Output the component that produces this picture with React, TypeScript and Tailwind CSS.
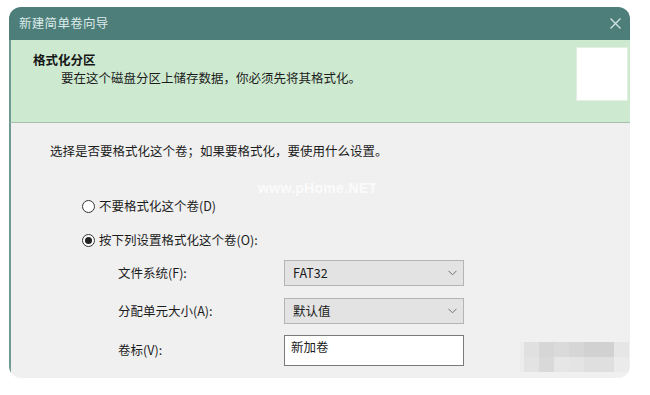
const font = { fontFamily: '"Noto Sans CJK SC", "Noto Sans", sans-serif' };

function Radio({ checked = false }: { checked?: boolean }) {
  return (
    <span className="w-[13px] h-[13px] rounded-full border border-[#333] bg-white flex items-center justify-center shrink-0">
      {checked && <span className="w-[7px] h-[7px] rounded-full bg-[#222]" />}
    </span>
  );
}

function Chevron() {
  return (
    <svg width="9" height="6" viewBox="0 0 9 6" className="shrink-0">
      <polyline points="0.5,0.8 4.5,4.8 8.5,0.8" fill="none" stroke="#6f6f6f" strokeWidth="1" />
    </svg>
  );
}

function Select({ value }: { value: string }) {
  return (
    <div className="w-[180px] h-[26px] bg-[#e3e3e3] border border-[#b4b4b4] flex items-center justify-between pl-[8px] pr-[6px]">
      <span className="text-[12.5px] text-[#1c1c1c]">{value}</span>
      <Chevron />
    </div>
  );
}

const mosaic = [
  ["#ececec", "#e0e0e0", "#d6d6d6", "#dadada", "#d6d6d6", "#d1d1d1", "#e6e6e6"],
  ["#ececec", "#e3e3e3", "#d9d9d9", "#e6e6e6", "#e4e4e4", "#dfdfdf", "#ebebeb"],
];
const mosaicW = [4, 15, 15, 15, 15, 30, 15];

export default function App() {
  return (
    <div className="w-[650px] h-[395px] bg-white relative overflow-hidden pt-[7px] pl-[9px]" style={font}>
      <div className="w-[621px] h-[371px] rounded-[12px] overflow-hidden flex flex-col bg-[#f0f0f0]">
        {/* Title bar */}
        <div className="h-[33px] bg-[#4e7e79] flex items-center justify-between pl-[10px] pr-[9px] shrink-0">
          <span className="text-[12.5px] text-[#dcecea] tracking-[0.3px]">新建简单卷向导</span>
          <svg width="11" height="11" viewBox="0 0 11 11">
            <path d="M0.5 0.5 L10.5 10.5 M10.5 0.5 L0.5 10.5" stroke="#d3e6e3" strokeWidth="1.3" />
          </svg>
        </div>

        {/* Header */}
        <div className="h-[83px] bg-[#cde9cf] border-b border-[#a8bfa9] border-l-2 border-l-[#6f9a93] flex justify-between shrink-0">
          <div className="pl-[22px] pt-[11px]">
            <div className="text-[12.5px] font-bold text-[#161616] leading-[18px]">格式化分区</div>
            <div className="text-[12.5px] text-[#1c1c1c] leading-[18px] pl-[28px]">要在这个磁盘分区上储存数据，你必须先将其格式化。</div>
          </div>
          <div className="w-[52px] h-[54px] bg-white mt-[7px] mr-[2px] border border-[#e2efe2]" />
        </div>

        {/* Body */}
        <div className="flex-1 border-l-2 border-[#6f9a93] pl-[39px] relative">
          <div className="mt-[19px] text-[12.5px] leading-[18px] text-[#1c1c1c]">选择是否要格式化这个卷；如果要格式化，要使用什么设置。</div>

          <div className="mt-[37px] ml-[32px] flex items-center gap-[4px] text-[12.5px] leading-[18px] text-[#1c1c1c]">
            <Radio />
            <span>不要格式化这个卷(D)</span>
          </div>
          <div className="mt-[16px] ml-[32px] flex items-center gap-[4px] text-[12.5px] leading-[18px] text-[#1c1c1c]">
            <Radio checked />
            <span>按下列设置格式化这个卷(O):</span>
          </div>

          <div className="ml-[68px] mt-[11px] flex flex-col gap-[12px]">
            <div className="flex items-center">
              <span className="w-[166px] text-[12.5px] text-[#1c1c1c]">文件系统(F):</span>
              <Select value="FAT32" />
            </div>
            <div className="flex items-center">
              <span className="w-[166px] text-[12.5px] text-[#1c1c1c]">分配单元大小(A):</span>
              <Select value="默认值" />
            </div>
            <div className="flex items-center -mt-[1px]">
              <span className="w-[166px] text-[12.5px] text-[#1c1c1c]">卷标(V):</span>
              <div className="w-[180px] h-[31px] bg-white border border-[#7a7a7a] pl-[6px] pt-[2px] text-[12.5px] text-[#1c1c1c]">新加卷</div>
            </div>
          </div>

          {/* watermark */}
          <div className="absolute left-[247px] top-[55px] text-[14px] font-bold text-[#fbfbfb] tracking-[0.3px]" style={{ fontFamily: '"Liberation Sans", sans-serif' }}>
            www.pHome.NET
          </div>
        </div>
      </div>

      {/* mosaic blur in bottom-right */}
      <div className="absolute left-[520px] top-[342px] flex flex-col">
        {mosaic.map((row, r) => (
          <div key={r} className="flex">
            {row.map((c, i) => (
              <div key={i} className="h-[15px]" style={{ width: mosaicW[i], background: c }} />
            ))}
          </div>
        ))}
      </div>
    </div>
  );
}
